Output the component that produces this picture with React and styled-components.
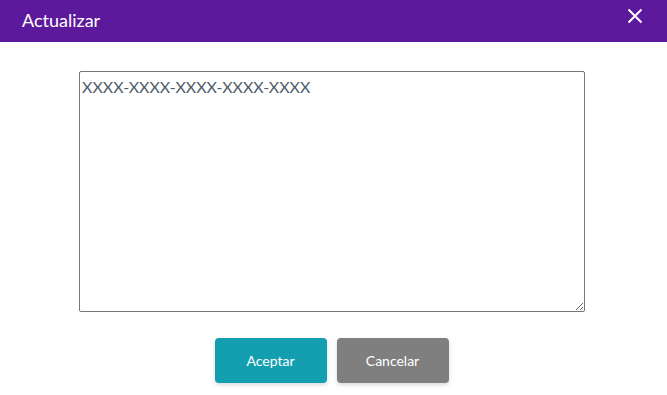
import React from 'react';
import styled, { createGlobalStyle } from 'styled-components';

const GlobalStyle = createGlobalStyle`
  html, body {
    margin: 0;
    padding: 0;
    background: #ffffff;
    font-family: Lato, "Open Sans", "Liberation Sans", sans-serif;
  }
`;

const Modal = styled.div`
  width: 667px;
  height: 395px;
  background: #ffffff;
  display: flex;
  flex-direction: column;
`;

const Header = styled.div`
  height: 42px;
  background: #5c199c;
  display: flex;
  align-items: center;
  justify-content: space-between;
  padding: 0 24px 0 22px;
  box-sizing: border-box;
`;

const Title = styled.h1`
  margin: 0 0 3px;
  font-size: 18px;
  font-weight: 400;
  color: #ffffff;
`;

const CloseButton = styled.button`
  background: none;
  border: none;
  padding: 0;
  margin-bottom: 10px;
  width: 16px;
  height: 16px;
  cursor: pointer;
  display: flex;
`;

const Body = styled.div`
  display: flex;
  flex-direction: column;
  align-items: center;
  padding: 29px 0 0 0;
  margin-left: -3px;
`;

const Field = styled.textarea`
  width: 506px;
  height: 241px;
  box-sizing: border-box;
  border: 1px solid #767676;
  border-radius: 2px;
  padding: 5px 2px;
  font-family: Lato, "Open Sans", "Liberation Sans", sans-serif;
  font-size: 16px;
  color: #525d6b;
  resize: both;
  outline: none;
`;

const Actions = styled.div`
  display: flex;
  gap: 10px;
  margin-top: 26px;
  margin-left: -1px;
`;

const Button = styled.button`
  width: 112px;
  height: 45px;
  border: none;
  border-radius: 4px;
  background: ${p => p.$variant === 'primary' ? '#149fb0' : '#7f7f7f'};
  color: #ffffff;
  font-family: Lato, "Open Sans", "Liberation Sans", sans-serif;
  font-size: 14px;
  box-shadow: 0 2px 4px rgba(0, 0, 0, 0.15);
  cursor: pointer;
`;

export default function App() {
  return (
    <>
      <GlobalStyle />
      <Modal>
        <Header>
          <Title>Actualizar</Title>
          <CloseButton aria-label="Cerrar">
            <svg width="16" height="16" viewBox="0 0 16 16">
              <path d="M1.5 1.5 L14.5 14.5 M14.5 1.5 L1.5 14.5" stroke="#ffffff" strokeWidth="2" />
            </svg>
          </CloseButton>
        </Header>
        <Body>
          <Field defaultValue="XXXX-XXXX-XXXX-XXXX-XXXX" />
          <Actions>
            <Button $variant="primary">Aceptar</Button>
            <Button>Cancelar</Button>
          </Actions>
        </Body>
      </Modal>
    </>
  );
}
